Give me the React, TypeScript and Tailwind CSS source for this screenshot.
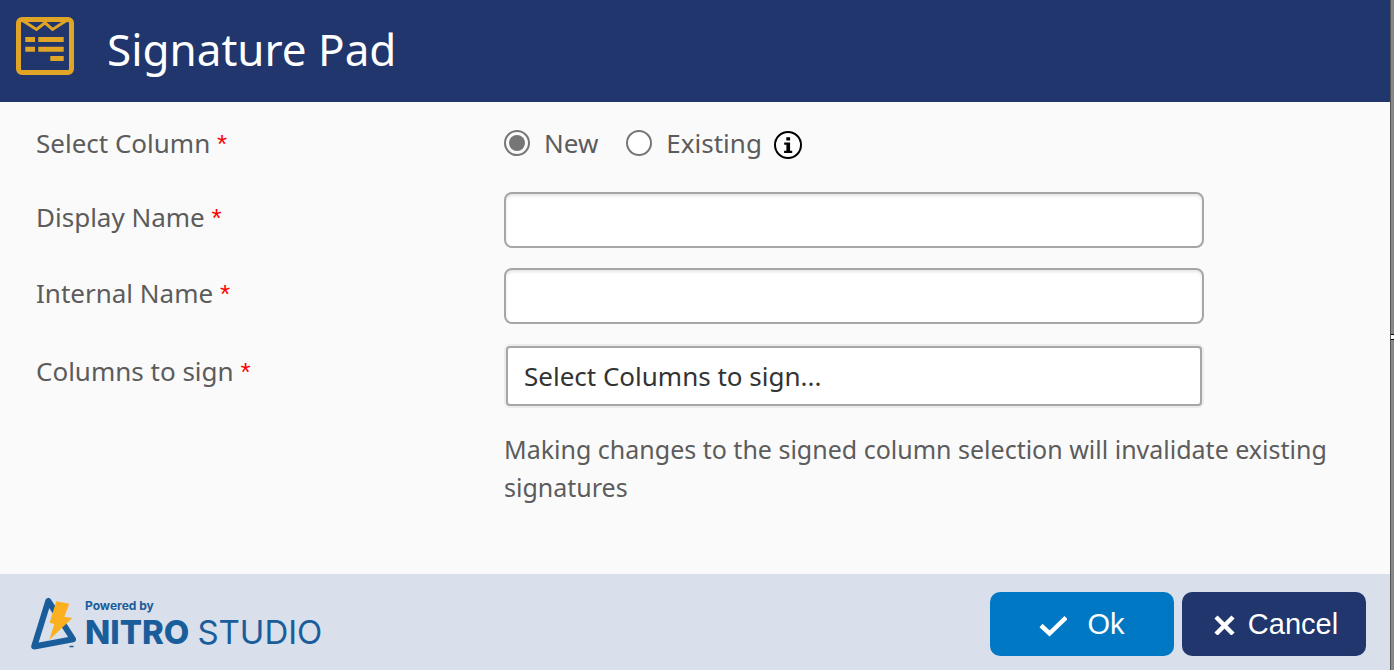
import { useState } from "react";
import type { InputHTMLAttributes, ReactNode } from "react";

const inputStyles =
  "block h-14 w-full max-w-[700px] rounded-lg border-2 border-[#a6a6a6] bg-white px-4 text-[#333333] shadow-[inset_0_2px_3px_rgba(0,0,0,0.1)] outline-none focus:border-[#0078c4]";

function PadIcon() {
  return (
    <svg className="size-[60px] shrink-0" viewBox="0 0 60 60" fill="none" aria-hidden="true">
      <rect x="3.5" y="3.5" width="53" height="53" rx="3.5" stroke="#e0a526" strokeWidth="5" />
      <path d="M7.5 4.5 21.5 13.4 30 6.8 37.5 13.4 51.500 4.5" stroke="#e0a526" strokeWidth="3" />
      <path d="M10.300 23.5h9.700M23.300 23.5h25.400M10.300 33.200h9.700M23.300 33.200h25.400M35.300 42.500h13.400" stroke="#e0a526" strokeWidth="5" />
    </svg>
  );
}

function InfoIcon() {
  return (
    <svg className="size-7 shrink-0" viewBox="0 0 28 28" aria-hidden="true">
      <circle cx="14" cy="14" r="13" fill="#ffffff" stroke="#000000" strokeWidth="2" />
      <path d="M12.300 6.200h3.800v3.200h-3.800zM10.200 11.500h5.900v8.200h2.100v2.300H10.100v-2.300h2.300v-5.900h-2.200z" fill="#000000" />
    </svg>
  );
}

function NitroMark() {
  return (
    <svg className="h-[56px] w-[48px] shrink-0" viewBox="0 0 48 56" fill="none" aria-hidden="true">
      <path d="M19.300 7 5.200 52.500 44 45.200z" stroke="#1a5d9b" strokeWidth="6" strokeLinejoin="round" />
      <path d="m27.300 7.200 13 2.500-5 13 8 1.300-23 22 5-16-4.700-1.300z" fill="#fcaf1f" />
      <path d="M40.500 52.500h4" stroke="#1a5d9b" strokeWidth="1.500" />
    </svg>
  );
}

function Required() {
  return <span className="font-['Liberation_Sans',sans-serif] leading-none text-[#ff0000]">*</span>;
}

function FieldLabel({ htmlFor, children }: { htmlFor: string; children: ReactNode }) {
  return (
    <label htmlFor={htmlFor} className="self-start pt-1.5">
      {children} <Required />
    </label>
  );
}

function Radio({ label, ...props }: { label: string } & InputHTMLAttributes<HTMLInputElement>) {
  return (
    <label className="flex items-center gap-3.5">
      <input
        type="radio"
        name="column"
        className="size-[26px] appearance-none rounded-full border-2 border-[#767676] bg-white checked:bg-[#767676] checked:bg-clip-content checked:p-[3px]"
        {...props}
      />
      {label}
    </label>
  );
}

export default function App() {
  const [column, setColumn] = useState("new");

  return (
    <div className="flex min-h-screen bg-[#fafafa] font-['Segoe_UI','Noto_Sans',sans-serif] text-[26px] leading-[38px] text-[#5c5c5c]">
      <form className="flex min-w-0 flex-1 flex-col" onSubmit={(e) => e.preventDefault()}>
        <header className="flex h-[102px] items-center gap-8 bg-[#20366d] px-[15px] pb-2.5">
          <PadIcon />
          <h1 className="pt-1.5 text-[44px] leading-[60px] text-white">Signature Pad</h1>
        </header>

        <main className="flex-1 px-9 pt-[22px] pb-12">
          <div className="grid grid-cols-[468px_1fr]">
            <span id="column-label">
              Select Column <Required />
            </span>
            <div role="radiogroup" aria-labelledby="column-label" className="flex items-center gap-7">
              <Radio label="New" checked={column === "new"} onChange={() => setColumn("new")} />
              <div className="flex items-center gap-3">
                <Radio label="Existing" checked={column === "existing"} onChange={() => setColumn("existing")} />
                <button type="button" aria-label="Column help" className="flex pt-1">
                  <InfoIcon />
                </button>
              </div>
            </div>
          </div>

          <div className="mt-[30px] grid grid-cols-[468px_1fr] gap-y-5">
            <FieldLabel htmlFor="display-name">Display Name</FieldLabel>
            <input id="display-name" type="text" className={inputStyles} />
            <FieldLabel htmlFor="internal-name">Internal Name</FieldLabel>
            <input id="internal-name" type="text" className={inputStyles} />
          </div>

          <div className="mt-[22px] grid grid-cols-[468px_1fr]">
            <FieldLabel htmlFor="sign-columns">Columns to sign</FieldLabel>
            <div>
              <div className="max-w-[700px] px-0.5">
                <input
                  id="sign-columns"
                  type="text"
                  placeholder="Select Columns to sign..."
                  className="block h-[60px] w-full rounded border-2 border-[#a6a6a6] bg-white px-4 text-[#333333] ring-2 ring-[#ececec] outline-none placeholder:text-[#333333]"
                />
              </div>
              <p className="mt-6 text-[25px]">
                Making changes to the signed column selection will invalidate existing signatures
              </p>
            </div>
          </div>
        </main>

        <footer className="flex h-24 items-center justify-between bg-[#d9dfeb] pr-6 pl-[29px]">
          <div className="flex items-center gap-2 font-[Inter,sans-serif] text-[#1a5d9b]">
            <NitroMark />
            <div className="pt-1">
              <p className="text-[12px] leading-4 font-bold">Powered by</p>
              <p className="flex items-baseline gap-2 text-[33px] leading-9 whitespace-nowrap">
                <strong className="font-extrabold">NITRO</strong>
                <span>STUDIO</span>
              </p>
            </div>
          </div>
          <div className="flex gap-2 pt-1 font-['Liberation_Sans',Arial,sans-serif] text-[29px] text-white">
            <button type="submit" className="flex h-16 w-46 items-center justify-center gap-5 rounded-[10px] bg-[#0078c4]">
              <svg className="size-7" viewBox="0 0 28 28" fill="none" aria-hidden="true">
                <path d="m2 15.500 8.500 8L27 7.500" stroke="currentColor" strokeWidth="4.500" />
              </svg>
              Ok
            </button>
            <button type="button" className="flex h-16 w-46 items-center justify-center gap-3 rounded-[10px] bg-[#20366d] pl-1">
              <svg className="size-[22px]" viewBox="0 0 22 22" fill="none" aria-hidden="true">
                <path d="m2 4 17 17m0-17-17 17" stroke="currentColor" strokeWidth="4.500" />
              </svg>
              Cancel
            </button>
          </div>
        </footer>
      </form>

      {/* window edge with its resize handle */}
      <div className="relative w-1 shrink-0 overflow-hidden border-l border-[#555555] bg-[#8a8886]">
        <span className="absolute top-1/2 -left-px h-1.5 w-2 -translate-y-px border border-black bg-white" />
      </div>
    </div>
  );
}
